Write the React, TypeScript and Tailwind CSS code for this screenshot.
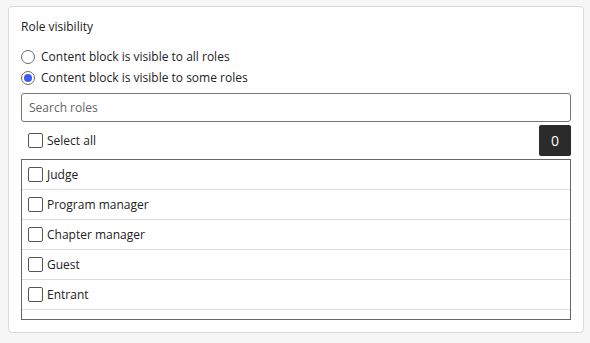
import React, { useState } from 'react';

const roles = ['Judge', 'Program manager', 'Chapter manager', 'Guest', 'Entrant'];

const Box = ({ checked }: { checked: boolean }) => (
  <span className="flex h-[15px] w-[15px] shrink-0 items-center justify-center rounded-[2px] border border-[#555] bg-white">
    {checked && (
      <svg width="11" height="11" viewBox="0 0 12 12" fill="none">
        <path d="M2 6.5l2.5 2.5L10 3.5" stroke="#222" strokeWidth="1.6" />
      </svg>
    )}
  </span>
);

const Radio = ({ checked }: { checked: boolean }) => (
  <span className="flex h-[14px] w-[14px] shrink-0 items-center justify-center rounded-full border border-[#6b6b6b] bg-white">
    {checked && <span className="h-[8px] w-[8px] rounded-full bg-[#3d5ef2]" />}
  </span>
);

export default function App() {
  const [mode, setMode] = useState<'all' | 'some'>('some');
  const [selected, setSelected] = useState<string[]>([]);
  const [query, setQuery] = useState('');

  const toggle = (r: string) =>
    setSelected(prev => (prev.includes(r) ? prev.filter(x => x !== r) : [...prev, r]));

  const allChecked = selected.length === roles.length;
  const visible = roles.filter(r => r.toLowerCase().includes(query.toLowerCase()));

  return (
    <div className="min-h-[343px] bg-[#f6f6f6] pl-[8px] pr-[6px] pt-[6px] font-['Open_Sans',sans-serif] text-[12px] text-[#222]">
      <div className="h-[327px] rounded-[4px] border border-[#dadada] bg-white px-[12px] pt-[12px]">
        <div className="leading-[16px]">Role visibility</div>

        <div className="mt-[14px] flex flex-col gap-[5px]">
          <label className="flex cursor-pointer items-center gap-[6px] leading-[16px]" onClick={() => setMode('all')}>
            <Radio checked={mode === 'all'} />
            <span>Content block is visible to all roles</span>
          </label>
          <label className="flex cursor-pointer items-center gap-[6px] leading-[16px]" onClick={() => setMode('some')}>
            <Radio checked={mode === 'some'} />
            <span>Content block is visible to some roles</span>
          </label>
        </div>

        <input
          value={query}
          onChange={e => setQuery(e.target.value)}
          placeholder="Search roles"
          className="mt-[7px] block h-[29px] w-full rounded-[3px] border border-[#767676] px-[7px] text-[12px] outline-none placeholder:text-[#666]"
        />

        <div className="mt-[2px] flex h-[33px] items-center justify-between">
          <label
            className="flex cursor-pointer items-center gap-[4px] pl-[7px]"
            onClick={() => setSelected(allChecked ? [] : [...roles])}
          >
            <Box checked={allChecked} />
            <span>Select all</span>
          </label>
          <span className="flex h-[31px] w-[32px] items-center justify-center rounded-[2px] bg-[#2b2b2b] text-[14px] text-white">
            {selected.length}
          </span>
        </div>

        <div className="mt-[2px] h-[161px] overflow-hidden border border-[#666]">
          {visible.map(r => (
            <label
              key={r}
              className="flex h-[30px] cursor-pointer items-center gap-[4px] border-b border-[#dcdcdc] pl-[6px]"
              onClick={() => toggle(r)}
            >
              <Box checked={selected.includes(r)} />
              <span>{r}</span>
            </label>
          ))}
        </div>
      </div>
    </div>
  );
}
